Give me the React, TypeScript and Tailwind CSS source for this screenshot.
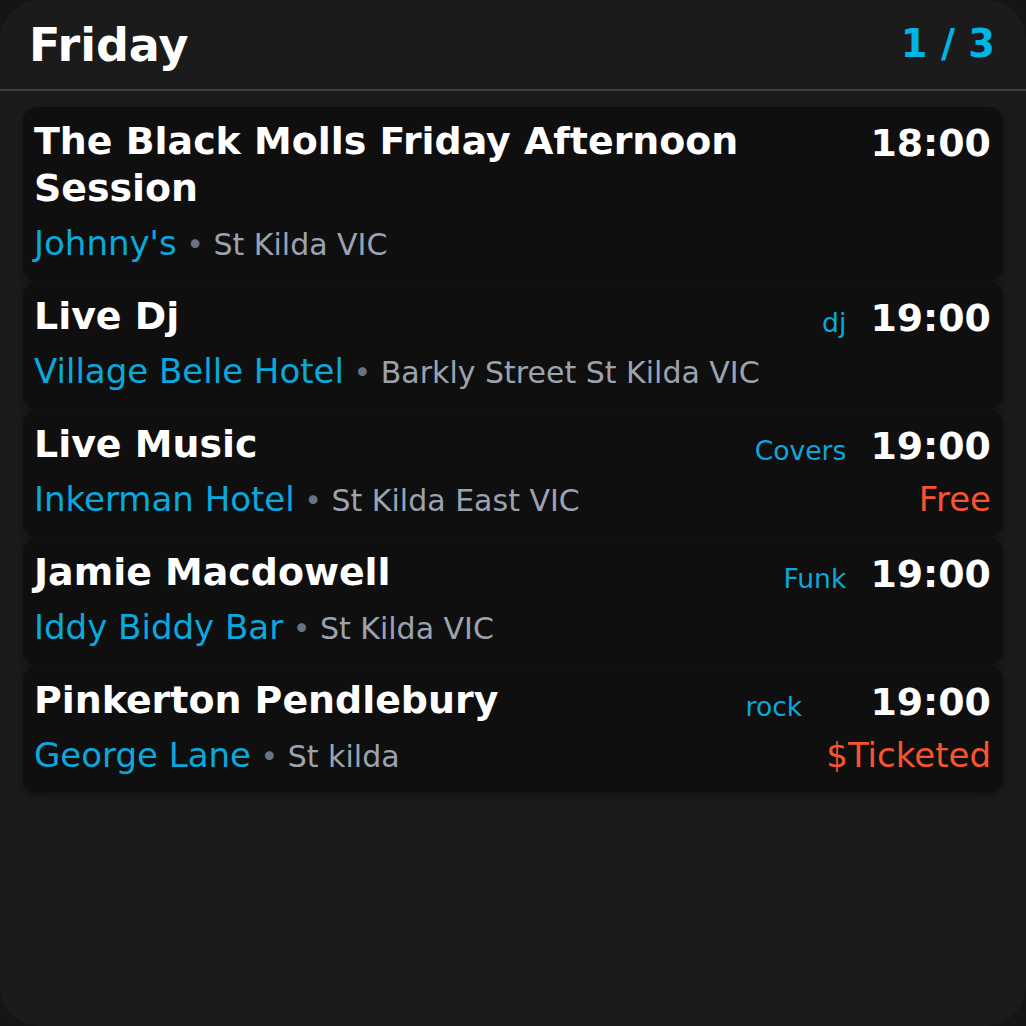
import React from "react";

type Ev = {
  title: string;
  venue: string;
  place: string;
  time: string;
  genre?: string;
  price?: string;
};

const events: Ev[] = [
  { title: "The Black Molls Friday Afternoon Session", venue: "Johnny's", place: "St Kilda VIC", time: "18:00" },
  { title: "Live Dj", venue: "Village Belle Hotel", place: "Barkly Street St Kilda VIC", time: "19:00", genre: "dj" },
  { title: "Live Music", venue: "Inkerman Hotel", place: "St Kilda East VIC", time: "19:00", genre: "Covers", price: "Free" },
  { title: "Jamie Macdowell", venue: "Iddy Biddy Bar", place: "St Kilda VIC", time: "19:00", genre: "Funk" },
  { title: "Pinkerton Pendlebury", venue: "George Lane", place: "St kilda", time: "19:00", genre: "rock", price: "$Ticketed" },
];

function Card({ ev }: { ev: Ev }) {
  return (
    <div className="flex gap-[24px] rounded-[14px] bg-[#0f0f0f] pl-[11px] pr-[12px] pt-[11px] pb-[12px] shadow-[0_4px_10px_rgba(0,0,0,0.3)]">
      <div className="min-w-0 flex-1">
        <div className="text-[37.9px] font-bold leading-[47px] text-white">{ev.title}</div>
        <div className="mt-[6px] h-[51px] whitespace-nowrap text-[34px] leading-[51px]">
          <span className="text-[#0aa8dc]">{ev.venue}</span>
          <span className="text-[30px] leading-[30px] text-[#6b7280]"> • </span>
          <span className="text-[30px] leading-[30px] text-[#9ca3af]">{ev.place}</span>
        </div>
      </div>
      {ev.genre && (
        <div className="mt-[12px] text-[26.6px] leading-[36px] text-[#0aa8dc]">{ev.genre}</div>
      )}
      <div className="mt-[2px] flex flex-col items-end">
        <div className="text-[37.9px] font-bold leading-[47px] text-white">{ev.time}</div>
        {ev.price && (
          <div className="mt-[5px] whitespace-nowrap text-[34px] leading-[48px] text-[#f9542f]">{ev.price}</div>
        )}
      </div>
    </div>
  );
}

export default function App() {
  return (
    <div className="h-[1026px] w-[1026px] bg-[#151515]" style={{ fontFamily: '"DejaVu Sans", sans-serif' }}>
      <div className="flex h-full w-full flex-col overflow-hidden rounded-[40px] bg-[#1b1b1b]">
        <div className="flex h-[89px] items-center justify-between pl-[29px] pr-[31px]">
          <div className="text-[46px] font-bold leading-none text-white">Friday</div>
          <div className="text-[38.4px] font-bold leading-none text-[#00b4e6]">1 / 3</div>
        </div>
        <div className="h-[2px] bg-[#3a3f4a]" />
        <div className="flex flex-col gap-[1px] px-[23px] pt-[16px]">
          {events.map((ev, i) => (
            <Card key={i} ev={ev} />
          ))}
        </div>
      </div>
    </div>
  );
}
